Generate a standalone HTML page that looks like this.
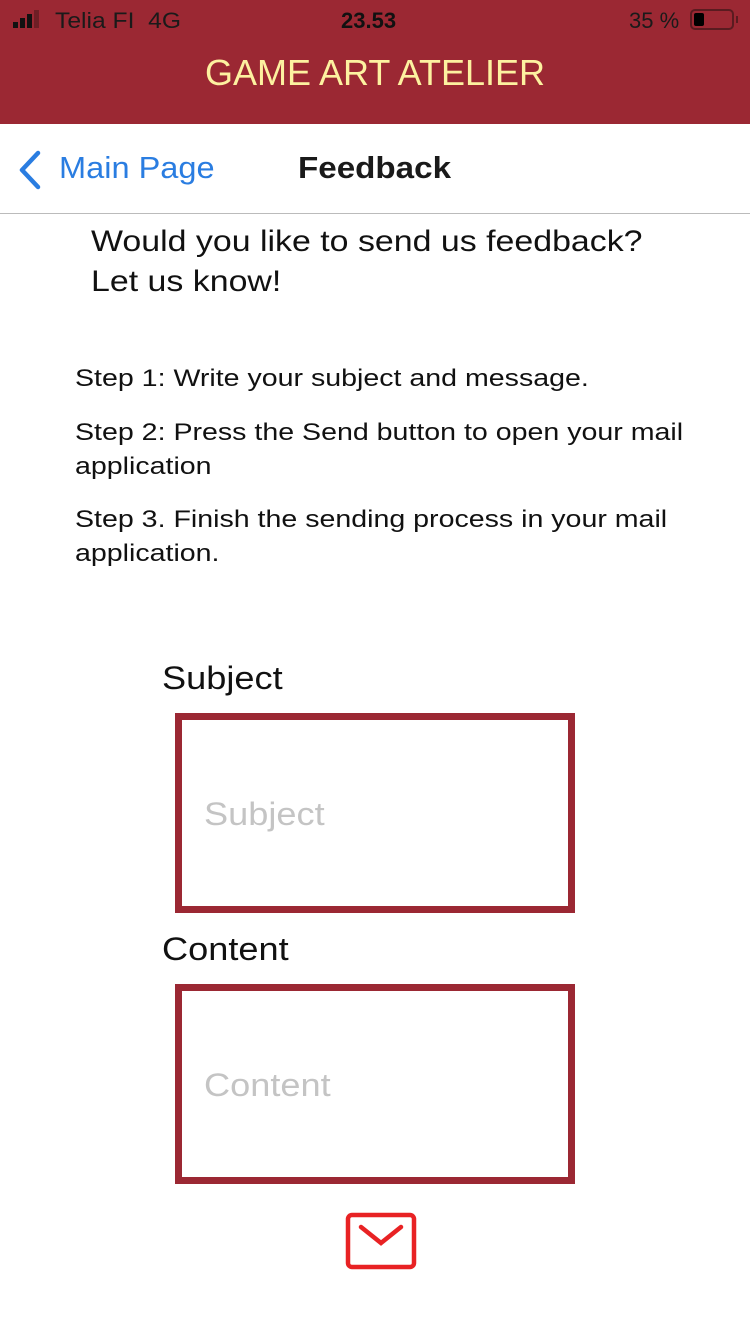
<!DOCTYPE html>
<html><head><meta charset="utf-8"><style>
*{margin:0;padding:0;box-sizing:border-box}
body{width:750px;height:1334px;background:#fff;font-family:"Liberation Sans",sans-serif;position:relative;overflow:hidden}
.a{position:absolute;white-space:nowrap;transform-origin:0 0}
</style></head><body>
<div class="a" style="left:0;top:0;width:750px;height:124px;background:#9b2833"></div>
<div class="a" style="left:13px;top:22px;width:5px;height:6px;background:#111"></div>
<div class="a" style="left:20px;top:18px;width:5px;height:10px;background:#111"></div>
<div class="a" style="left:27px;top:14px;width:5px;height:14px;background:#111"></div>
<div class="a" style="left:34px;top:10px;width:5px;height:18px;background:#6e1e25"></div>
<div class="a" style="left:55px;top:8px;font-size:22px;color:#1a1a1a;transform:scaleX(1.12)">Telia FI&nbsp;&nbsp;4G</div>
<div class="a" style="left:341px;top:8px;font-size:22px;font-weight:bold;color:#111">23.53</div>
<div class="a" style="left:629px;top:8px;font-size:22px;color:#1a1a1a">35 %</div>
<div class="a" style="left:690px;top:9px;width:44px;height:21px;border:2px solid #5a1b20;border-radius:5px"></div>
<div class="a" style="left:694px;top:13px;width:10px;height:13px;background:#000;border-radius:2px"></div>
<div class="a" style="left:736px;top:16px;width:2px;height:7px;background:#5a1b20"></div>
<div class="a" style="left:0;top:52px;width:750px;text-align:center;font-size:36px;color:#fdf1a0">GAME ART ATELIER</div>
<svg class="a" style="left:16px;top:150px" width="28" height="40"><path d="M22 3 L6 20 L22 37" fill="none" stroke="#2a7de1" stroke-width="4.5" stroke-linecap="round" stroke-linejoin="round"/></svg>
<div class="a" style="left:59px;top:150px;font-size:31px;color:#2a7de1;transform:scaleX(1.05)">Main Page</div>
<div class="a" style="left:298px;top:150px;font-size:31px;font-weight:bold;color:#1a1a1a;transform:scaleX(1.07)">Feedback</div>
<div class="a" style="left:0;top:213px;width:750px;height:1px;background:#bbb"></div>
<div class="a" style="left:91px;top:222px;font-size:30px;line-height:40px;color:#111;transform:scaleX(1.13)">Would you like to send us feedback?<br>Let us know!</div>
<div class="a" style="left:75px;top:362px;font-size:24px;line-height:34px;color:#111;transform:scaleX(1.19)">Step 1: Write your subject and message.</div>
<div class="a" style="left:75px;top:416px;font-size:24px;line-height:34px;color:#111;transform:scaleX(1.19)">Step 2: Press the Send button to open your mail<br>application</div>
<div class="a" style="left:75px;top:503px;font-size:24px;line-height:34px;color:#111;transform:scaleX(1.19)">Step 3. Finish the sending process in your mail<br>application.</div>
<div class="a" style="left:162px;top:660px;font-size:32px;color:#111;transform:scaleX(1.13)">Subject</div>
<div class="a" style="left:175px;top:713px;width:400px;height:200px;border:7px solid #9b2833"></div>
<div class="a" style="left:204px;top:796px;font-size:32px;color:#c4c4c4;transform:scaleX(1.13)">Subject</div>
<div class="a" style="left:162px;top:931px;font-size:32px;color:#111;transform:scaleX(1.13)">Content</div>
<div class="a" style="left:175px;top:984px;width:400px;height:200px;border:7px solid #9b2833"></div>
<div class="a" style="left:204px;top:1067px;font-size:32px;color:#c4c4c4;transform:scaleX(1.13)">Content</div>
<svg class="a" style="left:344px;top:1211px" width="74" height="60"><rect x="4" y="4" width="66" height="52" rx="4" fill="none" stroke="#e82224" stroke-width="4.5"/><path d="M17 16 L37 32 L57 16" fill="none" stroke="#e82224" stroke-width="4.5" stroke-linecap="round"/></svg>
</body></html>
